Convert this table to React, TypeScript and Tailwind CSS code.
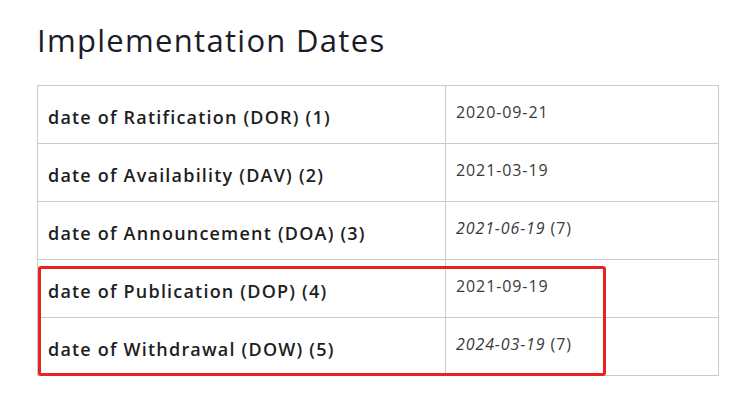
const rows = [
  { label: "date of Ratification (DOR) (1)", date: "2020-09-21", italic: false },
  { label: "date of Availability (DAV) (2)", date: "2021-03-19", italic: false },
  { label: "date of Announcement (DOA) (3)", date: "2021-06-19", italic: true },
  { label: "date of Publication (DOP) (4)", date: "2021-09-19", italic: false },
  { label: "date of Withdrawal (DOW) (5)", date: "2024-03-19", italic: true },
];

export default function App() {
  return (
    <div className="min-h-screen bg-white pl-[37px] pt-[22px] font-['Open_Sans',sans-serif]">
      <h2 className="text-[31px] font-medium leading-[36px] tracking-[1.3px] text-[#1c1c28]">
        Implementation Dates
      </h2>
      <div className="relative mt-[27px] w-[682px]">
        <table className="w-full border-collapse">
          <tbody>
            {rows.map((r) => (
              <tr key={r.label} className="h-[58px]">
                <td className="w-[408px] border border-[#cbcbcb] pl-[10px] pt-[5px] align-middle text-[18px] font-semibold tracking-[1.2px] text-[#1e1e1e]">
                  {r.label}
                </td>
                <td className="border border-[#cbcbcb] pb-[6px] pl-[10px] align-middle text-[16px] tracking-[0.9px] text-[#3a3a3a]">
                  {r.italic ? (
                    <>
                      <em>{r.date}</em> (7)
                    </>
                  ) : (
                    r.date
                  )}
                </td>
              </tr>
            ))}
          </tbody>
        </table>
        {/* highlight */}
        <div className="absolute left-[1px] top-[181px] h-[110px] w-[568px] rounded-[3px] border-[3px] border-[#e8231f]" />
      </div>
    </div>
  );
}
